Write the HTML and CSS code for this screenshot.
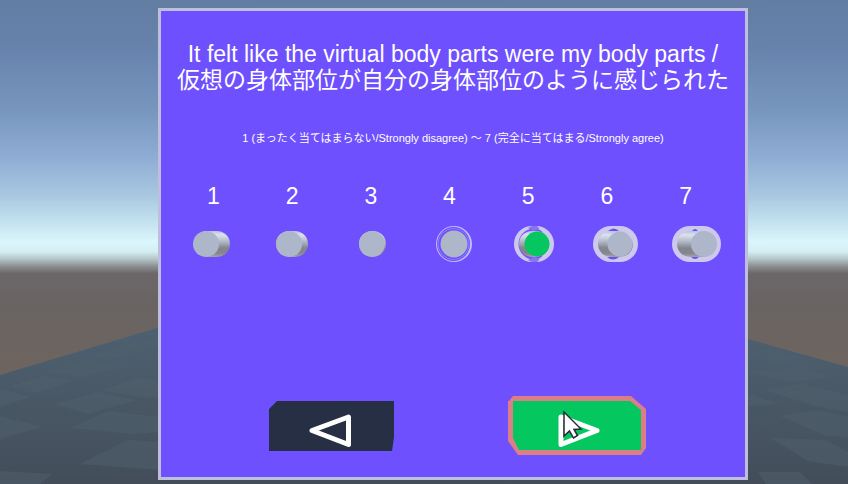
FILE: index.html
```html
<!DOCTYPE html>
<html lang="en">
<head>
<meta charset="utf-8">
<title>Questionnaire</title>
<link rel="stylesheet" href="styles.css">
</head>
<body>
<svg class="scene" viewBox="0 0 848 484" preserveAspectRatio="none" aria-hidden="true">
  <defs>
    <linearGradient id="sky" x1="0" y1="0" x2="0" y2="1">
      <stop offset="0" stop-color="#627da1"/>
      <stop offset=".1" stop-color="#6783ad"/>
      <stop offset=".22" stop-color="#7695bd"/>
      <stop offset=".32" stop-color="#8dabd3"/>
      <stop offset=".4" stop-color="#a7c6e0"/>
      <stop offset=".46" stop-color="#c4e2ef"/>
      <stop offset=".5" stop-color="#dbf6fb"/>
      <stop offset=".52" stop-color="#d4eef2"/>
      <stop offset=".535" stop-color="#b5c6ca"/>
      <stop offset=".55" stop-color="#8c9092"/>
      <stop offset=".565" stop-color="#6b6769"/>
      <stop offset=".63" stop-color="#696463"/>
      <stop offset=".75" stop-color="#6e645f"/>
      <stop offset="1" stop-color="#6e645f"/>
    </linearGradient>
    <linearGradient id="floor" gradientUnits="userSpaceOnUse" x1="0" y1="325" x2="0" y2="484">
      <stop offset="0" stop-color="#4d6172"/>
      <stop offset=".4" stop-color="#4a5967"/>
      <stop offset="1" stop-color="#434d5a"/>
    </linearGradient>
  </defs>
  <rect width="848" height="484" fill="url(#sky)"/>
  <path d="M0 375L160 327L450 250L748 339L848 367V484H0Z" fill="url(#floor)"/>
  <g fill="#50606c" opacity=".5">
    <path d="M90 356L140 340L160 342V346L115 359Z"/>
    <path d="M45 372L85 362L125 365L85 377Z"/>
    <path d="M10 386L45 376L72 381L35 393Z"/>
    <path d="M100 390L140 378L160 380V398L140 397Z"/>
    <path d="M55 404L98 392L136 400L88 414Z"/>
    <path d="M0 389L30 397L0 407Z"/>
    <path d="M70 428L108 411L160 417V432L135 434Z"/>
    <path d="M0 416L42 427L0 439Z"/>
    <path d="M80 464L128 440L160 442V470Z"/>
    <path d="M0 471L52 474L40 484H0Z"/>
    <path d="M748 352L768 348L805 358L772 363Z"/>
    <path d="M748 372L790 382L830 377L800 367Z"/>
    <path d="M764 390L800 384L848 395V412L815 406Z"/>
    <path d="M748 394L780 404L748 406Z"/>
    <path d="M780 416L818 410L848 417V438L824 435Z"/>
    <path d="M771 438L825 440L848 452V467L808 461Z"/>
    <path d="M758 472L800 472L812 484H766Z"/>
  </g>
</svg>

<svg class="defs" width="0" height="0" aria-hidden="true">
  <defs>
    <linearGradient id="side" x1="0" y1="0" x2="0" y2="1">
      <stop offset="0" stop-color="#b9bfdc"/>
      <stop offset=".15" stop-color="#dce3ee"/>
      <stop offset=".4" stop-color="#b3b9c6"/>
      <stop offset=".65" stop-color="#828690"/>
      <stop offset=".85" stop-color="#86858a"/>
      <stop offset="1" stop-color="#a3a3b4"/>
    </linearGradient>
  </defs>
</svg>

<main class="stage">
  <form class="panel">
    <fieldset class="question">
      <legend class="title">It felt like the virtual body parts were my body parts /<br><span lang="ja">仮想の身体部位が自分の身体部位のように感じられた</span></legend>
      <p class="hint" lang="ja">1 (まったく当てはまらない/Strongly disagree) ～ 7 (完全に当てはまる/Strongly agree)</p>
      <div class="scale">
        <label class="choice">1<input type="radio" name="score" value="1">
          <svg class="knob" viewBox="0 0 78 40"><rect x="20" y="7" width="36" height="26" rx="13" fill="url(#side)"/><circle cx="32" cy="20" r="13" fill="#aeb7ca"/></svg></label>
        <label class="choice">2<input type="radio" name="score" value="2">
          <svg class="knob" viewBox="0 0 78 40"><rect x="23" y="7" width="32" height="26" rx="13" fill="url(#side)"/><circle cx="36" cy="20" r="13" fill="#aeb7ca"/></svg></label>
        <label class="choice">3<input type="radio" name="score" value="3">
          <svg class="knob" viewBox="0 0 78 40"><rect x="27" y="7" width="27" height="26" rx="13" fill="url(#side)"/><circle cx="40" cy="20" r="13" fill="#aeb7ca"/></svg></label>
        <label class="choice">4<input type="radio" name="score" value="4">
          <svg class="knob" viewBox="0 0 78 40"><path fill="#c2bbf3" fill-rule="evenodd" d="M26 20a18 18 0 1 0 36 0a18 18 0 1 0-36 0ZM27 20a16.500 17 0 1 1 33 0a16.500 17 0 1 1-33 0Z"/><circle cx="43.500" cy="20" r="15.500" fill="none" stroke="#8d7dff"/><circle cx="44" cy="20" r="13.500" fill="#aeb7ca"/></svg></label>
        <label class="choice">5<input type="radio" name="score" value="5" checked>
          <svg class="knob" viewBox="0 0 78 40"><rect x="25" y="2" width="40" height="36" rx="18" fill="#cdc8ed"/><circle cx="45" cy="20" r="15.500" fill="#7558fa"/><path d="M43 2h5l3 3l-6 2l-6-3ZM43 38h5l3-3l-6-2l-6 3Z" fill="#8674f0"/><path d="M49 4.500a15.500 15.500 0 0 1 0 31a18 18 0 0 0 0-31" fill="#cdc8ed"/><rect x="30" y="7" width="30" height="26" rx="13" fill="url(#side)"/><circle cx="48" cy="20" r="12.500" fill="#04c760"/></svg></label>
        <label class="choice">6<input type="radio" name="score" value="6">
          <svg class="knob" viewBox="0 0 78 40"><rect x="25" y="2" width="45" height="36" rx="18" fill="#cdc8ed"/><path d="M40 7q6-5 11 0ZM39 33q6 5 12 0Z" fill="#6a52ef"/><rect x="30" y="7" width="35" height="26" rx="13" fill="url(#side)"/><circle cx="52" cy="20" r="12.500" fill="#aeb7ca"/></svg></label>
        <label class="choice">7<input type="radio" name="score" value="7">
          <svg class="knob" viewBox="0 0 78 40"><rect x="25" y="2" width="49" height="36" rx="18" fill="#cdc8ed"/><path d="M45 7q3-4 6 0ZM44 33q4 4 8 0Z" fill="#6a52ef"/><rect x="30" y="7" width="39" height="26" rx="13" fill="url(#side)"/><circle cx="57" cy="20" r="13" fill="#aeb7ca"/></svg></label>
      </div>
    </fieldset>
    <div class="actions">
      <button class="nav" type="button" aria-label="Previous">
        <svg viewBox="0 0 140 62"><path d="M2 14L10 6H127V42L125 56H2Z" fill="#262f44"/><path d="M45 35.500L81.500 22V49.500Z" fill="none" stroke="#fff" stroke-width="5" stroke-linejoin="round"/></svg>
      </button>
      <button class="nav" type="button" aria-label="Next">
        <svg viewBox="0 0 140 62"><path d="M2 6L6 1H124L139 14V53L134 60H11L1 46V6Z" fill="#dc7e87"/><path d="M6 6H123L134 15V55H12L6 43Z" fill="#04c760"/><path d="M54 22L90 35.500L54 49.500Z" fill="none" stroke="#fff" stroke-width="5" stroke-linejoin="round"/><path d="M57 17V41L62.500 36L66.500 43L70.500 40.500L67 34.500L74 34Z" fill="#fff" stroke="#282938" stroke-width="1.500"/></svg>
      </button>
    </div>
  </form>
</main>
</body>
</html>
```
FILE: styles.css
```css
* {
  box-sizing: border-box;
}

body {
  margin: 0;
  font-family: "Liberation Sans", "Noto Sans CJK JP", sans-serif;
  color: #fff;
}

.scene {
  position: fixed;
  inset: 0;
  width: 100%;
  height: 100%;
}

.defs {
  position: absolute;
}

.stage {
  position: relative;
  display: flex;
  min-height: 100vh;
  padding: 8px 100px 4px 158px;
}

.panel {
  flex: 1;
  display: flex;
  flex-direction: column;
  justify-content: space-between;
  padding: 30px 0 20px;
  border: 3px solid #bdbfdc;
  background: #6e50ff;
}

.question {
  min-width: 0;
  margin: 0;
  padding: 0;
  border: 0;
  text-align: center;
}

.title {
  width: 100%;
  padding: 0;
  font-size: 23px;
  line-height: 26px;
  white-space: nowrap;
}

.hint {
  margin: 36px 0;
  font-size: 11px;
  line-height: 18px;
  white-space: nowrap;
}

.scale {
  display: grid;
  grid-template-columns: repeat(7, 1fr);
  padding: 0 20px 0 13px;
}

.choice {
  position: relative;
  display: flex;
  flex-direction: column;
  align-items: center;
  font-size: 23px;
  line-height: 26px;
}

.choice input {
  position: absolute;
  inset: 0;
  margin: 0;
  opacity: 0;
}

.knob {
  width: 78px;
  height: 40px;
  margin-top: 15px;
}

.actions {
  display: flex;
  justify-content: center;
  gap: 100px;
  padding-left: 8px;
}

.nav {
  width: 140px;
  height: 62px;
  padding: 0;
  border: 0;
  background: none;
}

.nav svg {
  display: block;
  width: 100%;
  height: 100%;
}
```
